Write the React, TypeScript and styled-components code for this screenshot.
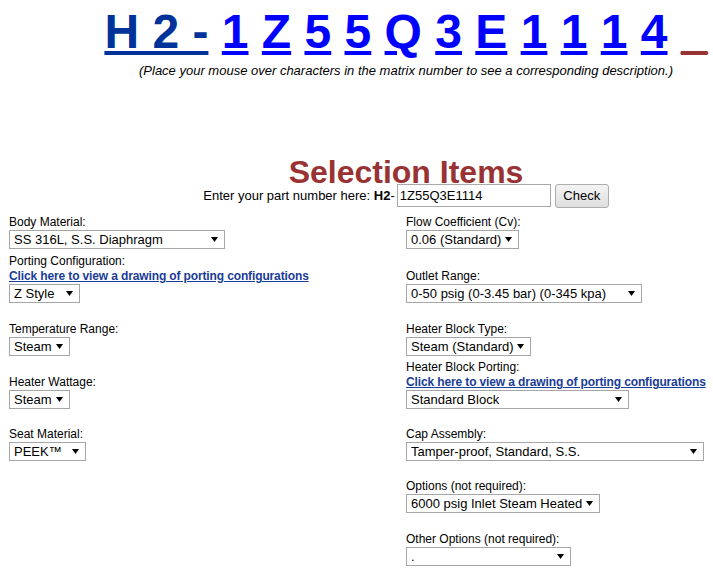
import React from "react";
import styled, { createGlobalStyle } from "styled-components";

const Global = createGlobalStyle`
  html, body { margin: 0; padding: 0; overflow: hidden; background: #fff; }
  body { font-family: "Liberation Sans", Arial, sans-serif; color: #000; }
`;

const Page = styled.div`
  width: 794px;
  padding: 4px 0 0 9px;
`;

const Matrix = styled.div`
  text-align: center;
  font-size: 48px;
  font-weight: bold;
  line-height: 55px;
  white-space: nowrap;
`;

type Tone = "prefix" | "code" | "blank";

const MatrixChar = styled.a<{ $tone: Tone }>`
  color: ${(p) => (p.$tone === "prefix" ? "#003399" : p.$tone === "blank" ? "#993333" : "#0000ff")};
  text-decoration: underline;
  cursor: pointer;
`;

const Hint = styled.div`
  margin-top: 4px;
  text-align: center;
  font-size: 13px;
  font-style: italic;
  line-height: 16px;
  white-space: nowrap;
`;

const Title = styled.h1`
  margin: 81px 0 0;
  text-align: center;
  font-size: 32px;
  font-weight: bold;
  line-height: 24px;
  height: 24px;
  color: #993333;
`;

const PartLine = styled.div`
  display: flex;
  justify-content: center;
  align-items: center;
  height: 23px;
  font-size: 13px;
`;

const PartInput = styled.input`
  box-sizing: border-box;
  width: 154px;
  height: 23px;
  margin: 0 0 0 2px;
  padding: 0 2px;
  border: 1px solid #a9a9a9;
  font: 13px "Liberation Sans", Arial, sans-serif;
  color: #000;
  outline: none;
`;

const CheckButton = styled.button`
  box-sizing: border-box;
  width: 54px;
  height: 24px;
  margin-left: 4px;
  border: 1px solid #adadad;
  border-radius: 3px;
  background: linear-gradient(#f4f4f4, #dedede);
  font: 13px "Liberation Sans", Arial, sans-serif;
  color: #000;
  padding: 0;
`;

const Form = styled.div`
  display: grid;
  grid-template-columns: 397px 397px;
  grid-template-rows: auto 54px 53px 53px 52px 52px 53px;
  margin-top: 8px;
`;

const Cell = styled.div`
  display: flex;
  flex-direction: column;
  align-items: flex-start;
  justify-content: flex-end;
`;

const Label = styled.div`
  font-size: 12px;
  line-height: 15px;
  white-space: nowrap;
`;

const DrawingLink = styled.a`
  font-size: 12px;
  font-weight: bold;
  line-height: 15px;
  letter-spacing: -0.13px;
  color: #1a3c96;
  text-decoration: underline;
  white-space: nowrap;
  cursor: pointer;
`;

const SelectBox = styled.span<{ $w: number }>`
  position: relative;
  display: inline-block;
  width: ${(p) => p.$w}px;
  height: 19px;
`;

const NativeSelect = styled.select`
  appearance: none;
  -webkit-appearance: none;
  box-sizing: border-box;
  width: 100%;
  height: 100%;
  margin: 0;
  padding: 0 14px 0 4px;
  border: 1px solid #a6a6a6;
  border-radius: 0;
  background: #fff;
  font: 13px "Liberation Sans", Arial, sans-serif;
  line-height: 17px;
  color: #000;
  outline: none;
`;

const Arrow = styled.svg`
  position: absolute;
  right: 7px;
  top: 7px;
  width: 7px;
  height: 5px;
  pointer-events: none;
`;

function Dropdown({ w, value }: { w: number; value: string }) {
  return (
    <SelectBox $w={w}>
      <NativeSelect defaultValue={value}>
        <option value={value}>{value}</option>
      </NativeSelect>
      <Arrow viewBox="0 0 7 5">
        <path d="M0 0 H7 L3.5 5 Z" fill="#000" />
      </Arrow>
    </SelectBox>
  );
}

type Field = { label: string; link?: boolean; w: number; value: string } | null;

const rows: [Field, Field][] = [
  [
    { label: "Body Material:", w: 216, value: "SS 316L, S.S. Diaphragm" },
    { label: "Flow Coefficient (Cv):", w: 113, value: "0.06 (Standard)" },
  ],
  [
    { label: "Porting Configuration:", link: true, w: 71, value: "Z Style" },
    { label: "Outlet Range:", w: 236, value: "0-50 psig (0-3.45 bar) (0-345 kpa)" },
  ],
  [
    { label: "Temperature Range:", w: 61, value: "Steam" },
    { label: "Heater Block Type:", w: 125, value: "Steam (Standard)" },
  ],
  [
    { label: "Heater Wattage:", w: 61, value: "Steam" },
    { label: "Heater Block Porting:", link: true, w: 223, value: "Standard Block" },
  ],
  [
    { label: "Seat Material:", w: 77, value: "PEEK™" },
    { label: "Cap Assembly:", w: 298, value: "Tamper-proof, Standard, S.S." },
  ],
  [null, { label: "Options (not required):", w: 194, value: "6000 psig Inlet Steam Heated" }],
  [null, { label: "Other Options (not required):", w: 165, value: "." }],
];

function FieldCell({ field }: { field: Field }) {
  if (!field) return <Cell />;
  return (
    <Cell>
      <Label>{field.label}</Label>
      {field.link && <DrawingLink>Click here to view a drawing of porting configurations</DrawingLink>}
      <Dropdown w={field.w} value={field.value} />
    </Cell>
  );
}

const code = ["1", "Z", "5", "5", "Q", "3", "E", "1", "1", "1", "4"];

export default function App() {
  return (
    <>
      <Global />
      <Page>
        <Matrix>
          <MatrixChar $tone="prefix">H 2 -</MatrixChar>{" "}
          {code.map((c, i) => (
            <React.Fragment key={i}>
              <MatrixChar $tone="code">{c}</MatrixChar>{" "}
            </React.Fragment>
          ))}
          <MatrixChar $tone="blank">_</MatrixChar>
        </Matrix>
        <Hint>(Place your mouse over characters in the matrix number to see a corresponding description.)</Hint>
        <Title>Selection Items</Title>
        <PartLine>
          <span>
            Enter your part number here:&nbsp;<b>H2</b>-
          </span>
          <PartInput defaultValue="1Z55Q3E1114" />
          <CheckButton>Check</CheckButton>
        </PartLine>
        <Form>
          {rows.map(([l, r], i) => (
            <React.Fragment key={i}>
              <FieldCell field={l} />
              <FieldCell field={r} />
            </React.Fragment>
          ))}
        </Form>
      </Page>
    </>
  );
}
